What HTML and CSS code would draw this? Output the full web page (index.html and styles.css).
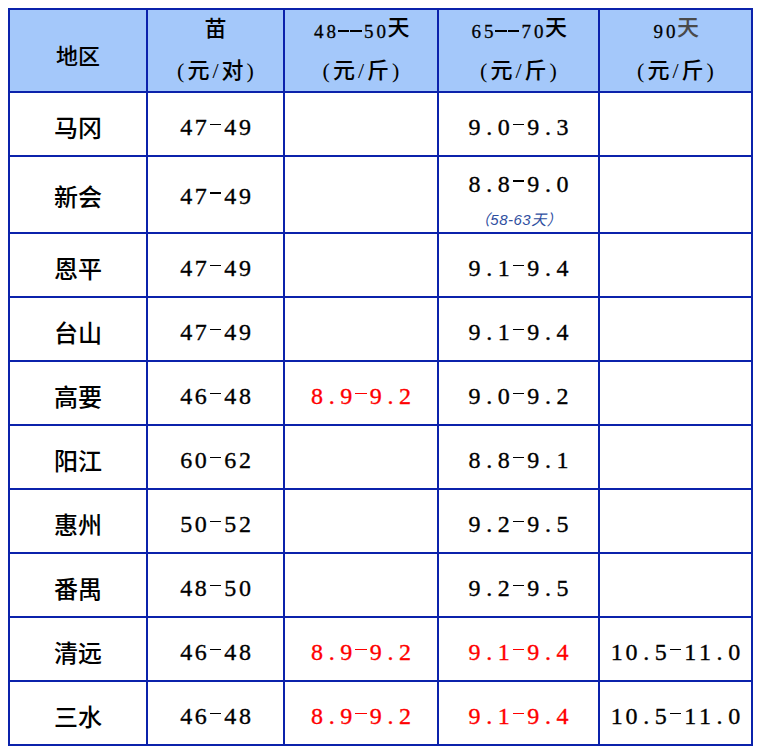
FILE: index.html
```html
<!DOCTYPE html>
<html>
<head>
<meta charset="utf-8">
<title>价格表</title>
<link rel="stylesheet" href="styles.css">
</head>
<body>
<div class="grid">
  <div class="hd one">地区</div>
  <div class="hd"><div>苗</div><div class="u">(元/对)</div></div>
  <div class="hd"><div><span class="hn"><span>4</span><span>8</span><span class="h">-</span><span class="h">-</span><span>5</span><span>0</span></span>天</div><div class="u">(元/斤)</div></div>
  <div class="hd"><div><span class="hn"><span>6</span><span>5</span><span class="h">-</span><span class="h">-</span><span>7</span><span>0</span></span>天</div><div class="u">(元/斤)</div></div>
  <div class="hd"><div><span class="hn"><span>9</span><span>0</span></span><span class="gray">天</span></div><div class="u">(元/斤)</div></div>

  <div class="c cn">马冈</div>
  <div class="c"><span class="n"><span>4</span><span>7</span><span class="h">-</span><span>4</span><span>9</span></span></div>
  <div class="c"></div>
  <div class="c"><span class="n"><span>9</span><span>.</span><span>0</span><span class="h">-</span><span>9</span><span>.</span><span>3</span></span></div>
  <div class="c"></div>

  <div class="c cn tall">新会</div>
  <div class="c tall"><span class="n"><span>4</span><span>7</span><span class="h">-</span><span>4</span><span>9</span></span></div>
  <div class="c tall"></div>
  <div class="c tall stack"><span class="n"><span>8</span><span>.</span><span>8</span><span class="h">-</span><span>9</span><span>.</span><span>0</span></span><span class="note">（58-63天）</span></div>
  <div class="c tall"></div>

  <div class="c cn">恩平</div>
  <div class="c"><span class="n"><span>4</span><span>7</span><span class="h">-</span><span>4</span><span>9</span></span></div>
  <div class="c"></div>
  <div class="c"><span class="n"><span>9</span><span>.</span><span>1</span><span class="h">-</span><span>9</span><span>.</span><span>4</span></span></div>
  <div class="c"></div>

  <div class="c cn">台山</div>
  <div class="c"><span class="n"><span>4</span><span>7</span><span class="h">-</span><span>4</span><span>9</span></span></div>
  <div class="c"></div>
  <div class="c"><span class="n"><span>9</span><span>.</span><span>1</span><span class="h">-</span><span>9</span><span>.</span><span>4</span></span></div>
  <div class="c"></div>

  <div class="c cn">高要</div>
  <div class="c"><span class="n"><span>4</span><span>6</span><span class="h">-</span><span>4</span><span>8</span></span></div>
  <div class="c"><span class="n red"><span>8</span><span>.</span><span>9</span><span class="h">-</span><span>9</span><span>.</span><span>2</span></span></div>
  <div class="c"><span class="n"><span>9</span><span>.</span><span>0</span><span class="h">-</span><span>9</span><span>.</span><span>2</span></span></div>
  <div class="c"></div>

  <div class="c cn">阳江</div>
  <div class="c"><span class="n"><span>6</span><span>0</span><span class="h">-</span><span>6</span><span>2</span></span></div>
  <div class="c"></div>
  <div class="c"><span class="n"><span>8</span><span>.</span><span>8</span><span class="h">-</span><span>9</span><span>.</span><span>1</span></span></div>
  <div class="c"></div>

  <div class="c cn">惠州</div>
  <div class="c"><span class="n"><span>5</span><span>0</span><span class="h">-</span><span>5</span><span>2</span></span></div>
  <div class="c"></div>
  <div class="c"><span class="n"><span>9</span><span>.</span><span>2</span><span class="h">-</span><span>9</span><span>.</span><span>5</span></span></div>
  <div class="c"></div>

  <div class="c cn">番禺</div>
  <div class="c"><span class="n"><span>4</span><span>8</span><span class="h">-</span><span>5</span><span>0</span></span></div>
  <div class="c"></div>
  <div class="c"><span class="n"><span>9</span><span>.</span><span>2</span><span class="h">-</span><span>9</span><span>.</span><span>5</span></span></div>
  <div class="c"></div>

  <div class="c cn">清远</div>
  <div class="c"><span class="n"><span>4</span><span>6</span><span class="h">-</span><span>4</span><span>8</span></span></div>
  <div class="c"><span class="n red"><span>8</span><span>.</span><span>9</span><span class="h">-</span><span>9</span><span>.</span><span>2</span></span></div>
  <div class="c"><span class="n red"><span>9</span><span>.</span><span>1</span><span class="h">-</span><span>9</span><span>.</span><span>4</span></span></div>
  <div class="c"><span class="n"><span>1</span><span>0</span><span>.</span><span>5</span><span class="h">-</span><span>1</span><span>1</span><span>.</span><span>0</span></span></div>

  <div class="c cn">三水</div>
  <div class="c"><span class="n"><span>4</span><span>6</span><span class="h">-</span><span>4</span><span>8</span></span></div>
  <div class="c"><span class="n red"><span>8</span><span>.</span><span>9</span><span class="h">-</span><span>9</span><span>.</span><span>2</span></span></div>
  <div class="c"><span class="n red"><span>9</span><span>.</span><span>1</span><span class="h">-</span><span>9</span><span>.</span><span>4</span></span></div>
  <div class="c"><span class="n"><span>1</span><span>0</span><span>.</span><span>5</span><span class="h">-</span><span>1</span><span>1</span><span>.</span><span>0</span></span></div>
</div>
</body>
</html>
```
FILE: styles.css
```css
html, body {
  background: #ffffff;
}
body {
  margin: 8px;
  color: #000;
}
.grid {
  display: grid;
  width: max-content;
  grid-template-columns: 136px 135px 152px 159px 151px;
  grid-template-rows: 81px 62px 75px repeat(8, 62px);
  gap: 2px;
  padding: 2px;
  background: #0b22ab;
}
.hd {
  background: #a4c8fa;
  display: flex;
  flex-direction: column;
  align-items: center;
  justify-content: center;
  font-family: "Liberation Serif", "Noto Sans CJK SC", serif;
  font-weight: 500;
  font-size: 22px;
  line-height: 42px;
  padding: 0 0 2px;
}
.hd.one {
  font-family: "Noto Sans CJK SC", sans-serif;
  padding: 6px 0 0;
}
.u {
  letter-spacing: 3px;
  padding-left: 3px;
}
.hn {
  font-weight: 400;
  font-size: 19px;
  -webkit-text-stroke: 0.3px currentColor;
}
.hn span {
  display: inline-block;
  width: 12.5px;
  text-align: center;
  line-height: 24px;
  vertical-align: -3px;
}
.hn .h {
  position: relative;
  -webkit-text-fill-color: transparent;
  -webkit-text-stroke: 0;
}
.hn .h::after {
  content: "";
  position: absolute;
  left: 0.5px;
  right: 0.5px;
  top: 10px;
  height: 1.5px;
  background: currentColor;
}
.gray {
  color: #4a4a4a;
}
.c {
  background: #fff;
  display: flex;
  align-items: center;
  justify-content: center;
  padding-top: 6px;
  line-height: 26px;
  font-family: "Liberation Serif", "Noto Sans CJK SC", serif;
}
.c.cn {
  font-family: "Noto Sans CJK SC", sans-serif;
  font-weight: 500;
  font-size: 24px;
}
.c.tall {
  padding-top: 2px;
}
.n {
  font-size: 24px;
  white-space: nowrap;
  -webkit-text-stroke: 0.35px currentColor;
}
.n span {
  display: inline-block;
  width: 14.7px;
  text-align: center;
}
.n .h {
  position: relative;
  -webkit-text-fill-color: transparent;
  -webkit-text-stroke: 0;
}
.n .h::after {
  content: "";
  position: absolute;
  left: 1.5px;
  right: 1.5px;
  top: 9.5px;
  height: 1.6px;
  background: currentColor;
}
.red {
  color: #ff0000;
}
.c.stack {
  flex-direction: column;
  justify-content: flex-start;
  padding-top: 13.5px;
}
.note {
  margin-top: 15.5px;
  font-family: "Liberation Sans", "Noto Sans CJK SC", sans-serif;
  font-style: italic;
  font-size: 15px;
  letter-spacing: 0.5px;
  line-height: 16px;
  color: #2f4f9f;
}
```
